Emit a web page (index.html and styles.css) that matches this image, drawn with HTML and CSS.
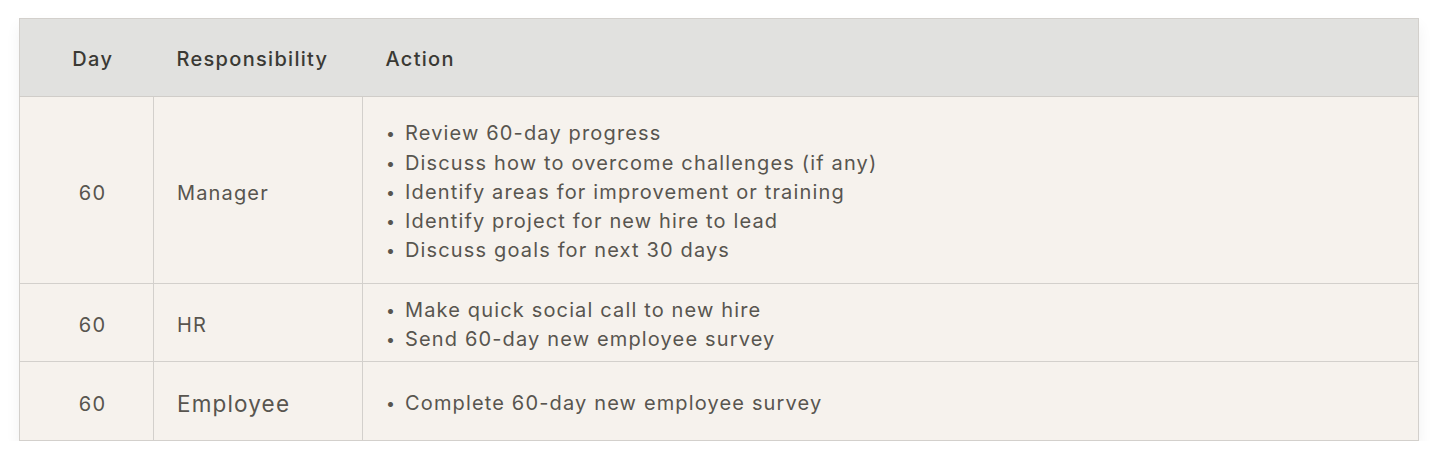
FILE: index.html
```html
<!DOCTYPE html>
<html>
<head>
<meta charset="utf-8">
<link rel="stylesheet" href="styles.css">
</head>
<body>
<div class="wrap">
<table class="plan">
<thead>
<tr><th class="c-day">Day</th><th class="c-resp">Responsibility</th><th class="c-act">Action</th></tr>
</thead>
<tbody>
<tr class="r1">
<td class="c-day">60</td>
<td class="c-resp">Manager</td>
<td class="c-act"><ul>
<li>Review 60-day progress</li>
<li>Discuss how to overcome challenges (if any)</li>
<li>Identify areas for improvement or training</li>
<li>Identify project for new hire to lead</li>
<li>Discuss goals for next 30 days</li>
</ul></td>
</tr>
<tr class="r2">
<td class="c-day">60</td>
<td class="c-resp">HR</td>
<td class="c-act"><ul>
<li>Make quick social call to new hire</li>
<li>Send 60-day new employee survey</li>
</ul></td>
</tr>
<tr class="r3">
<td class="c-day">60</td>
<td class="c-resp big">Employee</td>
<td class="c-act"><ul>
<li>Complete 60-day new employee survey</li>
</ul></td>
</tr>
</tbody>
</table>
</div>
</body>
</html>
```
FILE: styles.css
```css
html, body { margin: 0; padding: 0; background: #ffffff; }
.wrap { padding: 18px 20px 0 19px; }
.plan {
  width: 1400px;
  border-collapse: collapse;
  font-family: "Inter", "Liberation Sans", sans-serif;
  color: #58554f;
  font-size: 20px;
  letter-spacing: 1.15px;
  background: #f6f2ed;
  box-shadow: 0 8px 14px rgba(0,0,0,0.06);
  border: 1px solid #d3d0cc;
}
.plan th {
  background: #e1e1df;
  color: #3a3934;
  font-weight: 500;
  letter-spacing: 1.3px;
  text-align: left;
  height: 78px;
  padding: 2px 23px 0;
  border-bottom: 1px solid #d0cdc9;
  box-sizing: border-box;
}
.plan td {
  border: 1px solid #d3d0cc;
  padding: 5px 23px 0;
  vertical-align: middle;
  box-sizing: border-box;
}
.plan .c-day { width: 134px; text-align: center; padding-left: 35px; padding-right: 23px; }
.plan .c-resp { width: 209px; }
.r1 { height: 187px; }
.r2 { height: 78px; }
.r3 { height: 79px; }
.big { font-size: 22.5px; }
ul { list-style: none; margin: 0; padding: 0; }
li { position: relative; padding-left: 19px; line-height: 29.3px; }
li::before { content: "\2022"; position: absolute; left: 0; top: 0; font-size: 16px; }
```
